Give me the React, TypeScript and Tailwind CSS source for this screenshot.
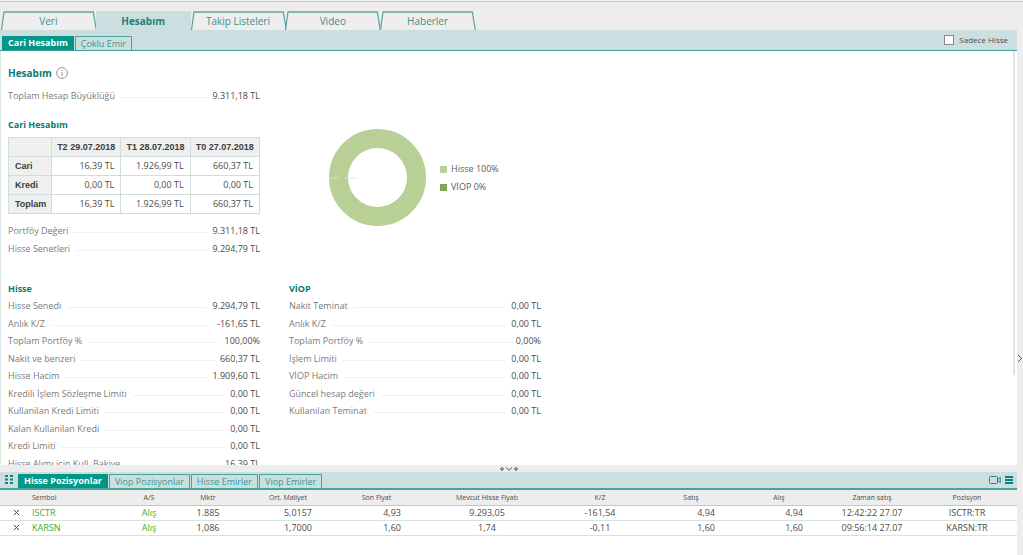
import React from "react";

type Entry = [label: string, value: string];

const mainTabs = ["Veri", "Hesabım", "Takip Listeleri", "Video", "Haberler"];

const stockRows: Entry[] = [
  ["Hisse Senedi", "9.294,79 TL"],
  ["Anlık K/Z", "-161,65 TL"],
  ["Toplam Portföy %", "100,00%"],
  ["Nakit ve benzeri", "660,37 TL"],
  ["Hisse Hacim", "1.909,60 TL"],
  ["Kredili İşlem Sözleşme Limiti", "0,00 TL"],
  ["Kullanilan Kredi Limiti", "0,00 TL"],
  ["Kalan Kullanilan Kredi", "0,00 TL"],
  ["Kredi Limiti", "0,00 TL"],
  ["Hisse Alımı için Kull. Bakiye", "16,39 TL"],
];

const viopRows: Entry[] = [
  ["Nakit Teminat", "0,00 TL"],
  ["Anlık K/Z", "0,00 TL"],
  ["Toplam Portföy %", "0,00%"],
  ["İşlem Limiti", "0,00 TL"],
  ["VİOP Hacim", "0,00 TL"],
  ["Güncel hesap değeri", "0,00 TL"],
  ["Kullanılan Teminat", "0,00 TL"],
];

const balances = [
  { name: "Cari", values: ["16,39 TL", "1.926,99 TL", "660,37 TL"] },
  { name: "Kredi", values: ["0,00 TL", "0,00 TL", "0,00 TL"] },
  { name: "Toplam", values: ["16,39 TL", "1.926,99 TL", "660,37 TL"] },
];

const columns = [
  { title: "Sembol", width: "w-[94px]", head: "text-left", cell: "text-left text-[#33b02c]" },
  { title: "A/S", width: "w-[46px]", head: "text-center", cell: "text-center text-[#33b02c]" },
  { title: "Mktr", width: "w-[72px]", head: "text-center", cell: "text-center" },
  { title: "Ort. Maliyet", width: "w-[88px]", head: "text-center", cell: "text-right pr-5" },
  { title: "Son Fiyat", width: "w-[89px]", head: "text-center", cell: "text-right pr-5" },
  { title: "Mevcut Hisse Fiyatı", width: "w-[132px]", head: "text-center", cell: "text-center" },
  { title: "K/Z", width: "w-[94px]", head: "text-center", cell: "text-center" },
  { title: "Satış", width: "w-[88px]", head: "text-center", cell: "text-right pr-5" },
  { title: "Alış", width: "w-[88px]", head: "text-center", cell: "text-right pr-5" },
  { title: "Zaman satış", width: "w-[98px]", head: "text-center", cell: "text-center" },
  { title: "Pozisyon", width: "w-[92px]", head: "text-center", cell: "text-center" },
];

const positions = [
  ["ISCTR", "Alış", "1.885", "5,0157", "4,93", "9.293,05", "-161,54", "4,94", "4,94", "12:42:22 27.07", "ISCTR:TR"],
  ["KARSN", "Alış", "1,086", "1,7000", "1,60", "1,74", "-0,11", "1,60", "1,60", "09:56:14 27.07", "KARSN:TR"],
];

function LeaderRow({ entry }: { entry: Entry }) {
  return (
    <div className="flex min-h-0 items-center text-[9px] leading-[17px] whitespace-nowrap">
      <dt className="text-[#7b7b7b]">{entry[0]}</dt>
      <span className="mx-[6px] mt-1 h-px flex-1 bg-[#f0f0f0]" />
      <dd className="text-[#4c4c4c]">{entry[1]}</dd>
    </div>
  );
}

function Section({ title, rows }: { title: string; rows: Entry[] }) {
  return (
    <section className="w-[252px]">
      <h3 className="text-[9px] leading-[17px] font-bold text-[#0b7a70]">{title}</h3>
      <dl className="grid h-[175px] grid-rows-10">
        {rows.map((r) => (
          <LeaderRow key={r[0]} entry={r} />
        ))}
      </dl>
    </section>
  );
}

function MainTab({ label, active }: { label: string; active: boolean }) {
  return (
    <button
      type="button"
      className={
        active
          ? "relative h-[19px] flex-1 bg-[#cbdfe1] text-[10px] leading-[21px] font-bold text-[#1d7f79]"
          : "relative h-[19px] flex-1 text-[10px] leading-[21px] text-[#3f8f8a]"
      }
    >
      {!active && (
        <svg
          className="absolute inset-0 h-full w-full overflow-visible"
          viewBox="0 0 95 19"
          preserveAspectRatio="none"
          aria-hidden="true"
        >
          <path d="M0.5 19 L3 1 H92.5 L95.5 19" fill="#eeeeee" stroke="#5fa8a3" strokeWidth="1.3" />
        </svg>
      )}
      <span className="relative">{label}</span>
    </button>
  );
}

function SubTab({ label, active }: { label: string; active?: boolean }) {
  return (
    <button
      type="button"
      className={
        active
          ? "h-[14px] border border-[#009688] bg-[#009688] px-[5px] text-[9px] leading-3 font-bold whitespace-nowrap text-white"
          : "h-[14px] border border-b-0 border-[#4ba39d] px-[5px] text-[9px] leading-3 whitespace-nowrap text-[#3f9690]"
      }
    >
      {label}
    </button>
  );
}

export default function App() {
  return (
    <div className="flex h-screen flex-col overflow-hidden border-t border-[#f3f3f3] bg-[#ededed] font-['Open_Sans',sans-serif] text-[#4c4c4c]">
      <div className="flex min-h-0 flex-1 flex-col border-t border-[#c9c9c9]">
        <nav className="flex h-7 items-end pl-px">
          <div className="flex w-[474px]">
            {mainTabs.map((t) => (
              <MainTab key={t} label={t} active={t === "Hesabım"} />
            ))}
          </div>
        </nav>

        <div className="flex min-h-0 flex-1">
          <div className="flex min-w-0 flex-1 flex-col">
            <div className="flex h-[21px] shrink-0 items-end justify-between border-b border-[#3f9f98] bg-[#cbdfe1] pl-[2px]">
              <div className="flex gap-px">
                <SubTab label="Cari Hesabım" active />
                <SubTab label="Çoklu Emir" />
              </div>
              <label className="flex items-center gap-[5px] self-center pr-[9px] text-[8px] leading-[10px] text-[#4c4c4c]">
                <input
                  type="checkbox"
                  className="size-[10px] appearance-none border border-[#8b8b8b] bg-white checked:bg-[#009688]"
                />
                Sadece Hisse
              </label>
            </div>

            <main className="flex min-h-0 flex-1 border-l border-[#dcebea] bg-white">
              <div className="min-w-0 flex-1 overflow-hidden pt-3 pl-[7px]">
                <h1 className="flex items-center gap-1 text-[10px] leading-5 font-bold text-[#0b7a70]">
                  Hesabım
                  <svg className="size-3" viewBox="0 0 12 12" fill="none" stroke="#8b8b8b" aria-hidden="true">
                    <circle cx="6" cy="6" r="5.4" strokeWidth="0.9" />
                    <path d="M6 5.2 V9 M6 2.9 V4" strokeWidth="1" />
                  </svg>
                </h1>
                <dl className="mt-1 w-[252px]">
                  <LeaderRow entry={["Toplam Hesap Büyüklüğü", "9.311,18 TL"]} />
                </dl>

                <div className="flex gap-[69px]">
                  <section className="w-[252px] shrink-0 pt-3">
                    <h2 className="text-[9px] leading-[18px] font-bold text-[#0b7a70]">Cari Hesabım</h2>
                    <table className="mt-[3px] w-full table-fixed border-collapse text-[9px] leading-3">
                      <thead>
                        <tr className="h-[19px] bg-[#efefef] text-[#3c3c3c]">
                          <td className="w-[43px] border border-[#cfdedd]" />
                          {["T2 29.07.2018", "T1 28.07.2018", "T0 27.07.2018"].map((h) => (
                            <th
                              key={h}
                              scope="col"
                              className="border border-[#cfdedd] p-0 text-center font-['Liberation_Sans',sans-serif] font-bold whitespace-nowrap"
                            >
                              {h}
                            </th>
                          ))}
                        </tr>
                      </thead>
                      <tbody>
                        {balances.map((b) => (
                          <tr key={b.name} className="h-[19px]">
                            <th
                              scope="row"
                              className="border border-[#cfdedd] bg-[#efefef] p-0 pl-[6px] text-left font-['Liberation_Sans',sans-serif] font-bold text-[#3c3c3c]"
                            >
                              {b.name}
                            </th>
                            {b.values.map((v, i) => (
                              <td key={i} className="border border-[#cfdedd] p-0 pr-[6px] text-right">
                                {v}
                              </td>
                            ))}
                          </tr>
                        ))}
                      </tbody>
                    </table>
                    <dl className="mt-2 grid h-[35px] grid-rows-2">
                      <LeaderRow entry={["Portföy Değeri", "9.311,18 TL"]} />
                      <LeaderRow entry={["Hisse Senetleri", "9.294,79 TL"]} />
                    </dl>
                  </section>

                  <figure className="flex items-start gap-[14px] pt-[25px]">
                    <svg className="size-[97px]" viewBox="0 0 97 97" role="img" aria-label="Hisse 100%, VİOP 0%">
                      <circle cx="48.5" cy="48.5" r="39" fill="none" stroke="#b8cf96" strokeWidth="19" />
                      <path d="M0 49 H10 M16 49 H27" stroke="#dfe9d0" strokeWidth="0.8" />
                    </svg>
                    <figcaption className="flex flex-col pt-[31px] text-[9px] leading-[18px] text-[#5c5c5c]">
                      <span className="flex items-center gap-1">
                        <i className="size-[7px] bg-[#b8cf96]" />
                        Hisse 100%
                      </span>
                      <span className="flex items-center gap-1">
                        <i className="size-[7px] bg-[#86a552]" />
                        VİOP 0%
                      </span>
                    </figcaption>
                  </figure>
                </div>

                <div className="mt-[23px] flex gap-[29px]">
                  <Section title="Hisse" rows={stockRows} />
                  <Section title="VİOP" rows={viopRows} />
                </div>
              </div>
              <div className="mr-[2px] h-[324px] w-[2px] shrink-0 bg-[#e3e3e3]" />
            </main>
          </div>

          <button type="button" aria-label="Paneli aç" className="flex w-[6px] shrink-0 items-center pt-[222px]">
            <svg className="h-[9px] w-[6px]" viewBox="0 0 6 9" fill="none" stroke="#555" aria-hidden="true">
              <path d="M1 1 L4.5 4.5 L1 8" />
            </svg>
          </button>
        </div>
      </div>

      <button type="button" aria-label="Paneli daralt" className="flex h-[7px] shrink-0 items-center justify-center pr-[5px]">
        <svg className="h-[6px] w-[20px]" viewBox="0 0 20 6" fill="none" stroke="#444" aria-hidden="true">
          <circle cx="3" cy="3" r="1.3" strokeWidth="0.9" />
          <path d="M7 1.2 L10 4.4 L13 1.2" strokeWidth="0.9" />
          <circle cx="17" cy="3" r="1.3" strokeWidth="0.9" />
        </svg>
      </button>

      <section className="mr-[6px] flex h-[83px] shrink-0 flex-col bg-white">
        <div className="flex h-[18px] shrink-0 items-end border-b-2 border-[#3fa79e] bg-[#cbdfe1] pl-[5px]">
          <svg className="mr-[5px] mb-1 h-[9px] w-2" viewBox="0 0 8 9" fill="#16847b" aria-hidden="true">
            <path d="M0 0h3v2H0zM5 0h3v2H5zM0 3.5h3v2H0zM5 3.5h3v2H5zM0 7h3v2H0zM5 7h3v2H5z" />
          </svg>
          <div className="flex gap-px">
            <SubTab label="Hisse Pozisyonlar" active />
            <SubTab label="Viop Pozisyonlar" />
            <SubTab label="Hisse Emirler" />
            <SubTab label="Viop Emirler" />
          </div>
          <div className="mr-1 mb-1 ml-auto flex items-center gap-1">
            <button type="button" aria-label="Video">
              <svg className="block h-2 w-3" viewBox="0 0 12 8" fill="none" stroke="#1b8d84" aria-hidden="true">
                <rect x="0.5" y="0.5" width="8" height="7" rx="1" />
                <path d="M9 3.2 L11.3 1.5 V6.5 L9 4.8" />
              </svg>
            </button>
            <button type="button" aria-label="Menü">
              <svg className="block h-2 w-2" viewBox="0 0 8 8" fill="#0b8379" aria-hidden="true">
                <path d="M0 0h8v2H0zM0 3h8v2H0zM0 6h8v2H0z" />
              </svg>
            </button>
          </div>
        </div>

        <table className="w-full table-fixed border-collapse text-[9px] leading-3">
          <thead>
            <tr className="h-[15px] border-b border-[#c6c6c6] bg-[#ededed] text-[7px]">
              <td className="w-8 p-0" />
              {columns.map((c) => (
                <th key={c.title} scope="col" className={`p-0 pt-[2px] font-normal whitespace-nowrap ${c.width} ${c.head}`}>
                  {c.title}
                </th>
              ))}
              <td className="w-1 p-0" />
            </tr>
          </thead>
          <tbody>
            {positions.map((row) => (
              <tr key={row[0]} className="h-[15px] border-b border-[#d5e2df]">
                <td className="p-0 pl-[13px]">
                  <button type="button" aria-label={`${row[0]} kapat`} className="block">
                    <svg className="block size-[7px]" viewBox="0 0 7 7" stroke="#444" aria-hidden="true">
                      <path d="M1 1 L6 6 M6 1 L1 6" />
                    </svg>
                  </button>
                </td>
                {row.map((v, i) => (
                  <td key={i} className={`p-0 whitespace-nowrap ${columns[i].cell}`}>
                    {v}
                  </td>
                ))}
                <td className="p-0" />
              </tr>
            ))}
          </tbody>
        </table>
      </section>
    </div>
  );
}
